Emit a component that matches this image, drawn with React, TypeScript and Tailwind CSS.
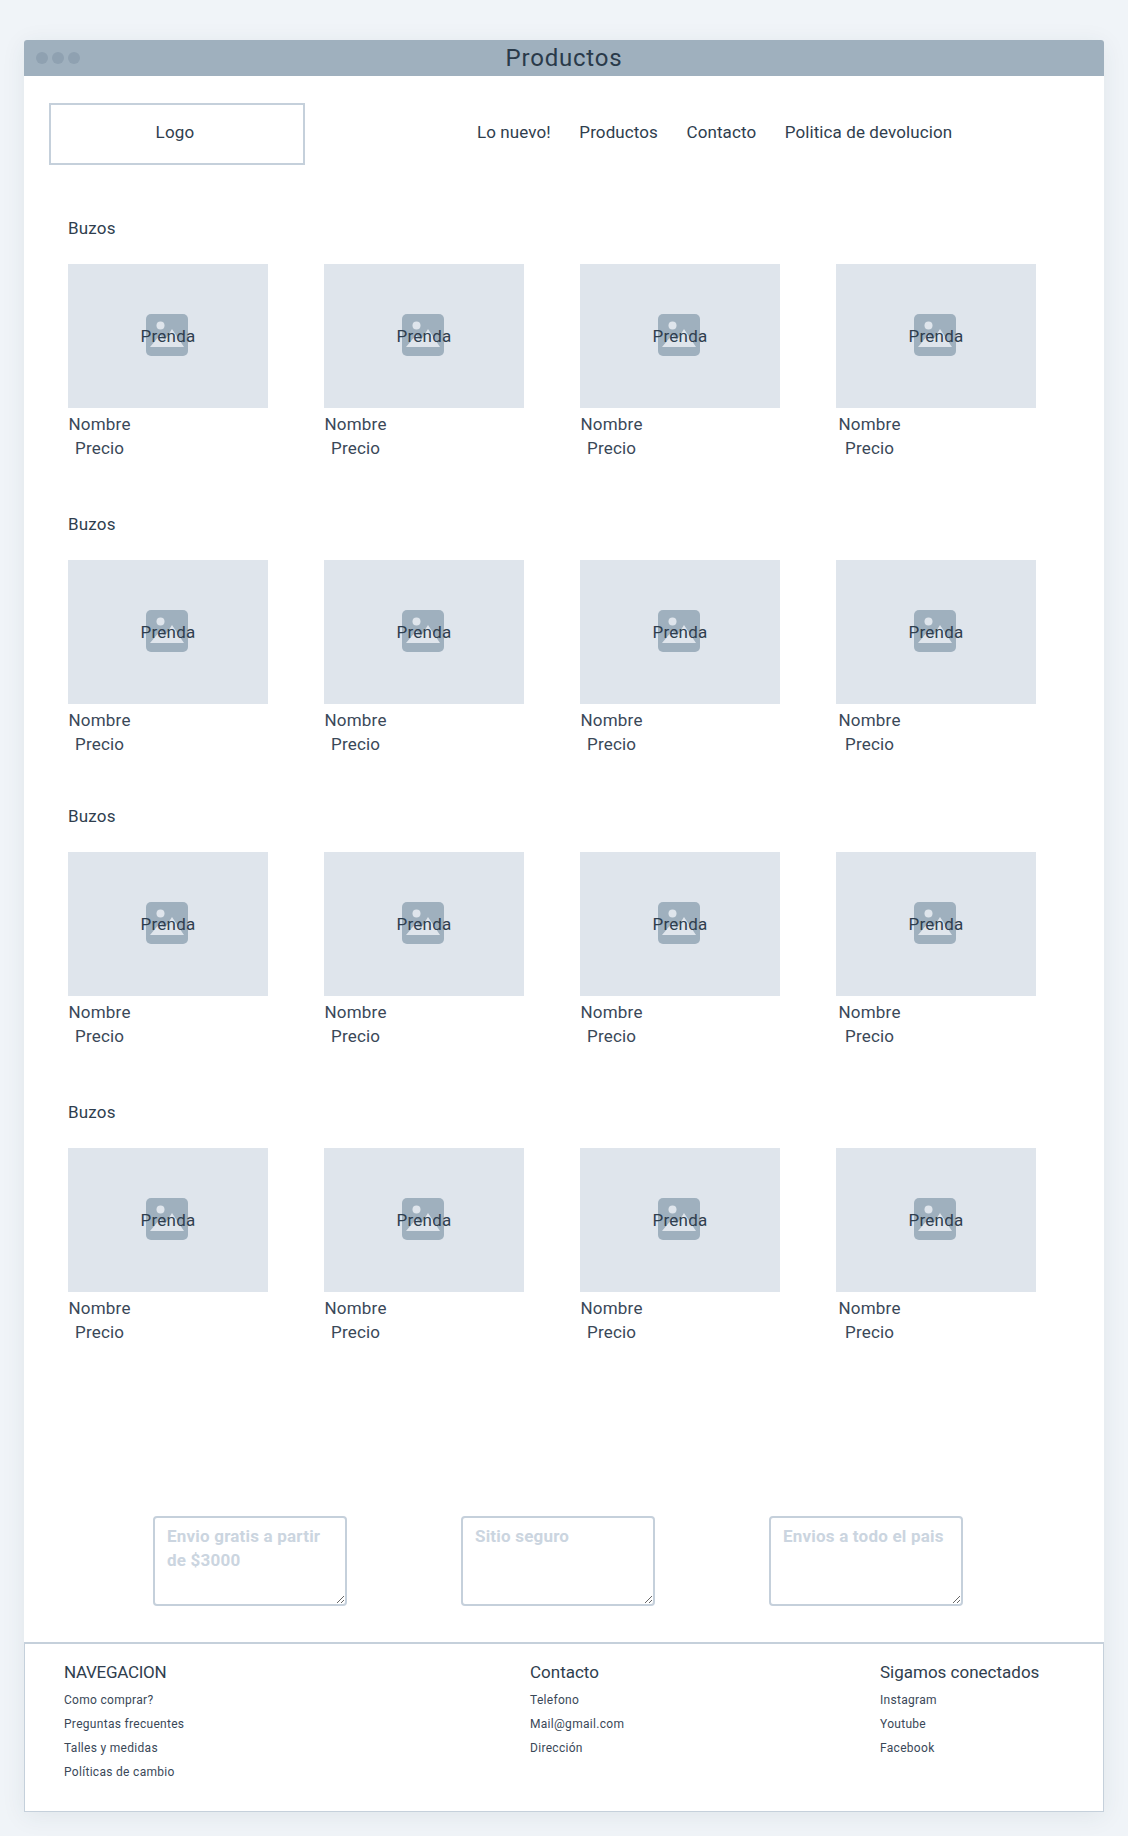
const font = "font-['Roboto',sans-serif]";

const columns = [
  { nombre: "ml-[0.5px]", precio: "ml-[7px]" },
  { nombre: "ml-[0.5px]", precio: "ml-[7px]" },
  { nombre: "ml-[0.5px]", precio: "ml-[7px]" },
  { nombre: "ml-[2.5px]", precio: "ml-[9px]" },
];

const sections = ["mb-[52px]", "mb-[48px]", "mb-[52px]", "mb-0"];

function ImageIcon() {
  return (
    <svg viewBox="0 0 42 42" className="absolute w-[42px] h-[42px] -translate-x-px -translate-y-px">
      <rect width="42" height="42" rx="5" fill="#9fb0be" />
      <circle cx="14.5" cy="11.5" r="4" fill="#dfe5ec" />
      <path d="M4 33 L14 21 L19 26 L26 15 L38 33 Z" fill="#dfe5ec" />
    </svg>
  );
}

function Product({ nombre, precio }: { nombre: string; precio: string }) {
  return (
    <div className="w-[200px] tracking-[0.2px]">
      <div className="relative h-[144px] bg-[#dfe5ec] flex items-center justify-center">
        <ImageIcon />
        <span className="relative text-[17px] leading-6 text-[#2f3e4e]">Prenda</span>
      </div>
      <p className={`mt-1 text-[17px] leading-6 text-[#3a4858] ${nombre}`}>Nombre</p>
      <p className={`text-[17px] leading-6 text-[#3a4858] ${precio}`}>Precio</p>
    </div>
  );
}

function Section({ margin }: { margin: string }) {
  return (
    <section className={margin}>
      <h2 className="text-[17px] leading-6 tracking-[0.2px] text-[#2f3e4e] mb-6">Buzos</h2>
      <div className="flex gap-[56px]">
        {columns.map((c, i) => (
          <Product key={i} nombre={c.nombre} precio={c.precio} />
        ))}
      </div>
    </section>
  );
}

function FooterColumn({
  title,
  links,
  className,
  titleClass = "",
}: {
  title: string;
  links: string[];
  className: string;
  titleClass?: string;
}) {
  return (
    <div className={className}>
      <h3 className={`text-[17px] leading-6 text-[#2f3e4e] mb-1 ${titleClass}`}>{title}</h3>
      <ul>
        {links.map((l) => (
          <li key={l} className="text-[12px] leading-6 tracking-[0.3px] text-[#3a4858]">
            {l}
          </li>
        ))}
      </ul>
    </div>
  );
}

function Note({ text }: { text: string }) {
  return (
    <textarea
      placeholder={text}
      className="w-[194px] h-[90px] border-2 border-[#c5d0db] rounded-[4px] px-3 py-[6px] text-[17px] leading-6 tracking-[0.2px] font-bold placeholder:text-[#cbd5e0] outline-none"
    />
  );
}

export default function App() {
  return (
    <div className={`min-h-[1836px] bg-[#f0f4f8] pt-10 px-6 ${font}`}>
      <div className="w-[1080px] h-[1772px] bg-white rounded-t-[3px] shadow-[0_4px_24px_rgba(40,60,80,0.08)] flex flex-col">
        <header className="relative h-9 bg-[#9fb0be] rounded-t-[3px] flex items-center justify-center">
          <div className="absolute left-3 flex gap-[4px]">
            <span className="w-3 h-3 rounded-full bg-[#8fa1b1]" />
            <span className="w-3 h-3 rounded-full bg-[#8fa1b1]" />
            <span className="w-3 h-3 rounded-full bg-[#8fa1b1]" />
          </div>
          <h1 className="text-[24px] leading-9 tracking-[0.8px] text-[#2a3a4a]">Productos</h1>
        </header>

        <nav className="flex items-center mt-[27px] ml-[25px]">
          <div className="w-[256px] h-[62px] border-2 border-[#c5d0db] flex items-center justify-center pr-1 pb-0.5 text-[17px] tracking-[0.2px] text-[#2f3e4e]">
            Logo
          </div>
          <ul className="flex gap-[28.5px] ml-[172px] -mt-0.5 text-[17px] tracking-[0.1px] text-[#2f3e4e]">
            <li>Lo nuevo!</li>
            <li>Productos</li>
            <li>Contacto</li>
            <li>Politica de devolucion</li>
          </ul>
        </nav>

        <main className="ml-[44px] mt-[51px]">
          {sections.map((m, i) => (
            <Section key={i} margin={m} />
          ))}
        </main>

        <div className="flex ml-[129px] gap-[114px] mt-[172px]">
          <Note text="Envio gratis a partir de $3000" />
          <Note text="Sitio seguro" />
          <Note text="Envios a todo el pais" />
        </div>

        <footer className="mt-auto h-[170px] border border-t-2 border-[#c5d0db] pt-[16px] pl-[39px] flex">
          <FooterColumn
            className="w-[466px]"
            titleClass="tracking-[-0.3px]"
            title="NAVEGACION"
            links={["Como comprar?", "Preguntas frecuentes", "Talles y medidas", "Políticas de cambio"]}
          />
          <FooterColumn
            className="w-[350px]"
            title="Contacto"
            links={["Telefono", "Mail@gmail.com", "Dirección"]}
          />
          <FooterColumn className="" title="Sigamos conectados" links={["Instagram", "Youtube", "Facebook"]} />
        </footer>
      </div>
    </div>
  );
}
